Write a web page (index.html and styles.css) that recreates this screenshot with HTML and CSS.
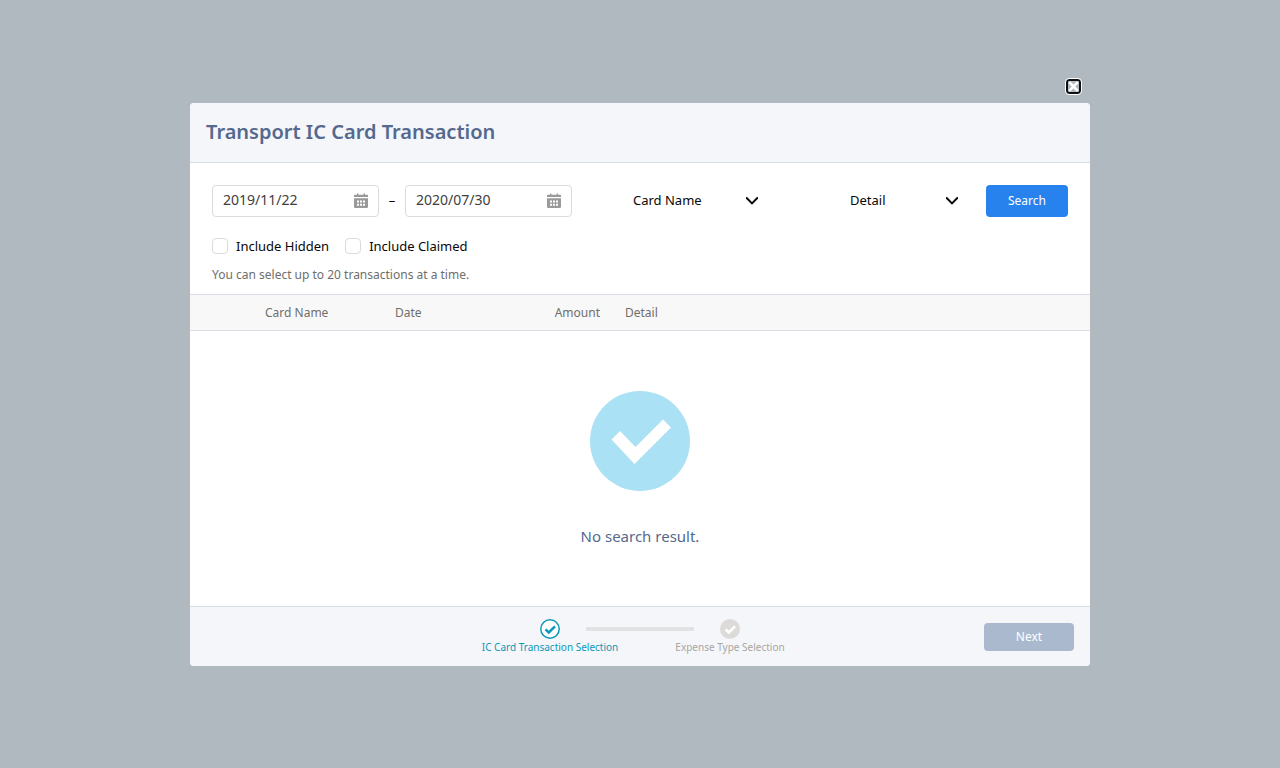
FILE: index.html
```html
<!DOCTYPE html>
<html lang="en">
<head>
<meta charset="utf-8">
<meta name="viewport" content="width=device-width, initial-scale=1">
<title>Transport IC Card Transaction</title>
<link rel="stylesheet" href="styles.css">
</head>
<body>
<div class="backdrop">
  <section class="dialog" role="dialog" aria-modal="true" aria-labelledby="dialog-title">
    <button class="close" type="button" aria-label="Close">
      <svg viewBox="0 0 11 11" width="11" height="11"><path d="M1.200 1.200l8.600 8.600M9.800 1.200l-8.600 8.600" fill="none" stroke="#fff" stroke-width="2.600"/></svg>
    </button>
    <header class="dialog-header">
      <h1 class="title" id="dialog-title">Transport IC Card Transaction</h1>
    </header>
    <form class="filters">
      <div class="search-row">
        <div class="date-range">
          <div class="field">
            <input class="date" type="text" value="2019/11/22" aria-label="Start date">
            <svg class="calendar" viewBox="0 0 14 15" width="14" height="15"><path fill="#999" d="M0 4V2.500Q0 1.800 .8 1.800H3V.8Q3.700-.2 4.400.8V1.800H9.600V.8Q10.300-.2 11 .8V1.800H13.200Q14 1.800 14 2.500V4ZM0 5.200H14V13.800Q14 15 12.800 15H1.200Q0 15 0 13.800Z"/><path fill="#fff" d="M3 7.500h2v2H3zM6 7.500h2v2H6zM9 7.500h2v2H9zM3 10.700h2v2H3zM6 10.700h2v2H6zM9 10.700h2v2H9z"/></svg>
          </div>
          <span class="dash">–</span>
          <div class="field">
            <input class="date" type="text" value="2020/07/30" aria-label="End date">
            <svg class="calendar" viewBox="0 0 14 15" width="14" height="15"><path fill="#999" d="M0 4V2.500Q0 1.800 .8 1.800H3V.8Q3.700-.2 4.400.8V1.800H9.600V.8Q10.300-.2 11 .8V1.800H13.200Q14 1.800 14 2.500V4ZM0 5.200H14V13.800Q14 15 12.800 15H1.200Q0 15 0 13.800Z"/><path fill="#fff" d="M3 7.500h2v2H3zM6 7.500h2v2H6zM9 7.500h2v2H9zM3 10.700h2v2H3zM6 10.700h2v2H6zM9 10.700h2v2H9z"/></svg>
          </div>
        </div>
        <div class="menus">
          <div class="menu menu-card">
            <select class="select select-card" aria-label="Card Name"><option>Card Name</option></select>
            <svg class="chevron" viewBox="0 0 12 8" width="12" height="8"><path d="M.7 1L6 6.400 11.300 1" fill="none" stroke="#080707" stroke-width="1.900" stroke-linecap="round"/></svg>
          </div>
          <div class="menu menu-detail">
            <select class="select select-detail" aria-label="Detail"><option>Detail</option></select>
            <svg class="chevron" viewBox="0 0 12 8" width="12" height="8"><path d="M.7 1L6 6.400 11.300 1" fill="none" stroke="#080707" stroke-width="1.900" stroke-linecap="round"/></svg>
          </div>
        </div>
        <button class="button search" type="button">Search</button>
      </div>
      <div class="checks">
        <label class="check"><input class="box" type="checkbox">Include Hidden</label>
        <label class="check"><input class="box" type="checkbox">Include Claimed</label>
      </div>
      <p class="hint">You can select up to 20 transactions at a time.</p>
    </form>
    <table class="list">
      <colgroup><col class="col-pick"><col class="col-card"><col class="col-date"><col class="col-amount"><col></colgroup>
      <thead>
        <tr><td></td><th scope="col">Card Name</th><th scope="col">Date</th><th class="amount" scope="col">Amount</th><th class="detail" scope="col">Detail</th></tr>
      </thead>
    </table>
    <div class="empty">
      <svg viewBox="0 0 100 100" width="100" height="100"><circle cx="50" cy="50" r="50" fill="#abe1f5"/><path d="M21.500 48.500L30 40 45.500 56 73 28.500 81 36.500 44.500 73Z" fill="#fff"/></svg>
      <p class="empty-text">No search result.</p>
    </div>
    <footer class="dialog-footer">
      <ol class="steps">
        <li class="step step-active">
          <svg viewBox="0 0 20 20" width="20" height="20"><circle cx="10" cy="10" r="9.200" fill="#fff" stroke="#0e97b8" stroke-width="1.500"/><path d="M5.500 10.300L8.800 13.500 15 7.300" fill="none" stroke="#0e97b8" stroke-width="2.500"/></svg>
          <span>IC Card Transaction Selection</span>
        </li>
        <li class="step">
          <svg viewBox="0 0 20 20" width="20" height="20"><circle cx="10" cy="10" r="10" fill="#dddbda"/><path d="M5.500 10.300L8.800 13.500 15 7.300" fill="none" stroke="#fff" stroke-width="2.500"/></svg>
          <span>Expense Type Selection</span>
        </li>
      </ol>
      <button class="button next" type="button">Next</button>
    </footer>
  </section>
</div>
</body>
</html>
```
FILE: styles.css
```css
* { box-sizing: border-box; }
body {
  margin: 0;
  font-family: "Noto Sans", "Open Sans", sans-serif;
  font-size: 13px;
  line-height: 20px;
  color: #080707;
  background: #b0b8c0;
}
h1, p, ol { margin: 0; padding: 0; }
svg { display: block; }
button, input, select { font: inherit; color: inherit; }
.backdrop {
  min-height: 100vh;
  display: flex;
  align-items: center;
  justify-content: center;
}
.dialog {
  position: relative;
  width: 100%;
  max-width: 900px;
  background: #fff;
  border-radius: 4px;
}
.close {
  position: absolute;
  right: 9px;
  top: -24px;
  display: grid;
  padding: 0;
  color: #fff;
  background: #b0b8c0;
  border: 2px solid #101010;
  border-radius: 3px;
  outline: 1px solid #fff;
}
.dialog-header {
  padding: 14px 16px 15px;
  background: #f4f6fa;
  border-bottom: 1px solid #d8dde6;
  border-radius: 4px 4px 0 0;
}
.title {
  font-size: 20px;
  line-height: 30px;
  font-weight: 600;
  color: #54698d;
}
.filters { padding: 22px 22px 9px; }
.search-row {
  display: flex;
  align-items: center;
  gap: 16px;
}
.date-range {
  display: flex;
  align-items: center;
}
.field { position: relative; }
.date {
  display: block;
  width: 167px;
  height: 32px;
  padding: 0 32px 2px 10px;
  font-size: 14px;
  color: #3e3e3c;
  background: #fff;
  border: 1px solid #dddbda;
  border-radius: 4px;
}
.calendar {
  position: absolute;
  right: 11px;
  top: 8px;
}
.dash {
  width: 26px;
  padding-bottom: 2px;
  text-align: center;
}
.menus {
  flex: 1;
  display: flex;
}
.menu { position: relative; }
.menu-card { flex: 1; }
.menu-detail { width: 200px; }
.select {
  display: block;
  width: 100%;
  height: 32px;
  padding: 0 32px 2px 0;
  appearance: none;
  background: transparent;
  border: 0;
}
.select-card { padding-left: 45px; }
.select-detail { padding-left: 80px; }
.chevron {
  position: absolute;
  right: 12px;
  top: 12px;
  pointer-events: none;
}
.button {
  display: block;
  padding: 0;
  font-size: 12px;
  color: #fff;
  border: 0;
  border-radius: 4px;
}
.search {
  flex: none;
  width: 82px;
  height: 32px;
  background: #2782ed;
}
.checks {
  display: flex;
  gap: 16px;
  padding: 19px 0 9px;
}
.check {
  display: flex;
  align-items: center;
  gap: 8px;
}
.box {
  width: 16px;
  height: 16px;
  margin: 0;
  appearance: none;
  background: #fff;
  border: 1px solid #dddbda;
  border-radius: 4px;
}
.hint {
  font-size: 12px;
  color: #706e6b;
}
.list {
  width: 100%;
  table-layout: fixed;
  border-collapse: separate;
  border-spacing: 0;
  color: #706e6b;
  font-size: 12px;
  background: #f8f8f8;
  border: solid #d8dde6;
  border-width: 1px 0;
}
.list th, .list td {
  height: 35px;
  padding: 2px 0 0;
  font-weight: 400;
  text-align: left;
}
.col-pick { width: 75px; }
.col-card { width: 130px; }
.col-date { width: 100px; }
.col-amount { width: 105px; }
.list .amount { text-align: right; }
.list .detail { padding-left: 25px; }
.empty {
  display: flex;
  flex-direction: column;
  align-items: center;
  gap: 35px;
  padding: 60px 16px;
}
.empty-text {
  font-size: 15px;
  color: #54698d;
}
.dialog-footer {
  display: grid;
  grid-template-columns: 1fr auto 1fr;
  align-items: center;
  padding: 12px 16px 11px;
  background: #f4f6fa;
  border-top: 1px solid #d8dde6;
  border-radius: 0 0 4px 4px;
}
.steps {
  grid-column: 2;
  display: flex;
  list-style: none;
}
.step {
  position: relative;
  width: 180px;
  display: flex;
  flex-direction: column;
  align-items: center;
  font-size: 10px;
  line-height: 16px;
  color: #a8a6a4;
}
.step-active { color: #0e97b8; }
.step-active::after {
  content: "";
  position: absolute;
  left: 70%;
  top: 8px;
  width: 60%;
  height: 4px;
  background: #e2e2e2;
}
.next {
  justify-self: end;
  width: 90px;
  height: 28px;
  background: #aab9ce;
}
```
